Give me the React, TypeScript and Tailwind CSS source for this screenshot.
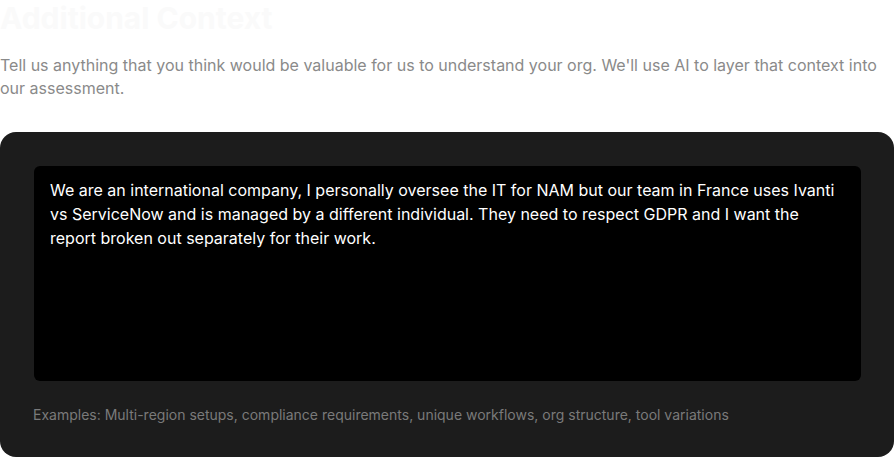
import React from 'react';

const App = () => {
  return (
    <div className="w-[895px] h-[458px] bg-white overflow-hidden font-['Inter',sans-serif]">
      {/* Header */}
      <h2 className="text-[30px] leading-[36px] font-bold text-[#fafafa]">Additional Context</h2>
      <p className="mt-[18px] text-[16px] leading-[23px] text-[#8a8a8a]">
        Tell us anything that you think would be valuable for us to understand your org. We'll use AI to layer that context into our assessment.
      </p>

      {/* Panel */}
      <div className="mt-[32px] w-[894px] h-[325px] bg-[#1c1c1c] rounded-[16px] pt-[34px] px-[33px]">
        <div className="h-[215px] bg-black rounded-[6px] px-[16px] py-[12px] text-white text-[16px] leading-[24px] ml-[1px]">
          We are an international company, I personally oversee the IT for NAM but our team in France uses Ivanti vs ServiceNow and is managed by a different individual. They need to respect GDPR and I want the report broken out separately for their work.
        </div>
        <p className="mt-[24px] text-[14px] leading-[20px] text-[#7a7a7a]">
          Examples: Multi-region setups, compliance requirements, unique workflows, org structure, tool variations
        </p>
      </div>
    </div>
  );
};

export default App;
